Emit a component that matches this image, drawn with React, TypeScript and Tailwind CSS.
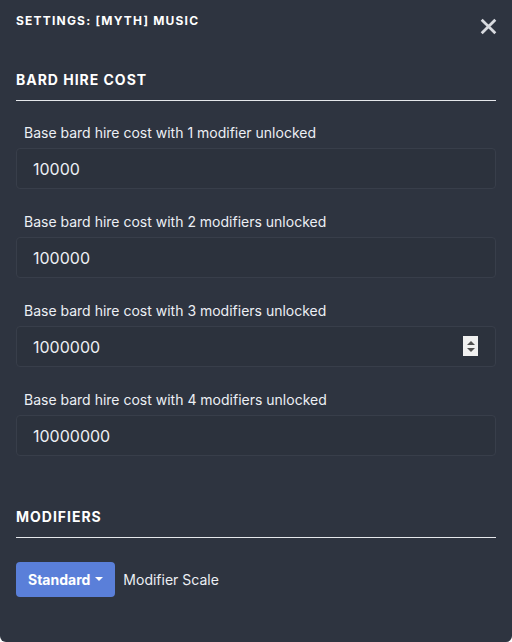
import { useState } from 'react'

const fields = [
  { label: 'Base bard hire cost with 1 modifier unlocked', value: '10000' },
  { label: 'Base bard hire cost with 2 modifiers unlocked', value: '100000' },
  { label: 'Base bard hire cost with 3 modifiers unlocked', value: '1000000', spinner: true },
  { label: 'Base bard hire cost with 4 modifiers unlocked', value: '10000000' },
]

function SectionHeading({ title }: { title: string }) {
  return (
    <div className="mx-4">
      <h2 className="text-[14px] leading-5 font-bold tracking-[0.07em] text-white">{title}</h2>
      <div className="mt-[10px] h-px bg-[#e5e7eb]" />
    </div>
  )
}

export default function App() {
  const [values, setValues] = useState(fields.map((f) => f.value))

  return (
    <div
      className="w-[512px] h-[642px] bg-[#2e3440] rounded-b-md text-[#e5e9f0] overflow-hidden"
      style={{ fontFamily: 'Inter, "Noto Sans", sans-serif' }}
    >
      {/* Header */}
      <div className="flex items-start justify-between pl-4 pr-[15px] pt-[13px]">
        <h1 className="text-[12px] leading-4 font-bold tracking-[0.1em] text-white">
          SETTINGS: [MYTH] MUSIC
        </h1>
        <button className="mt-[5px] text-[#d8dadf]">
          <svg width="17" height="17" viewBox="0 0 16 16" fill="none">
            <path d="M2.5 2.5 L13.5 13.5 M13.5 2.5 L2.5 13.5" stroke="currentColor" strokeWidth="2.6" strokeLinecap="square" />
          </svg>
        </button>
      </div>

      <div className="mt-[35px]">
        <SectionHeading title="BARD HIRE COST" />
      </div>

      <div className="mt-[22px] flex flex-col gap-[23px]">
        {fields.map((f, i) => (
          <div key={f.label} className="flex flex-col">
            <label className="px-6 text-[14px] leading-5 text-[#eceff4]">{f.label}</label>
            <div className="relative mx-4 mt-[5px]">
              <input
                type="text"
                value={values[i]}
                onChange={(e) => {
                  const next = [...values]
                  next[i] = e.target.value
                  setValues(next)
                }}
                className="w-full h-[41px] rounded-[4px] border border-[#383e4a] bg-[#2c323d] pl-4 pr-3 text-[16px] text-[#eceff4] outline-none"
              />
              {f.spinner && (
                <div className="absolute right-[18px] top-[10px] w-[15px] h-[20px] bg-[#f0f0f0] flex flex-col items-center justify-center gap-[3px]">
                  <div className="w-0 h-0 border-l-[4px] border-r-[4px] border-b-[4px] border-l-transparent border-r-transparent border-b-[#505050]" />
                  <div className="w-0 h-0 border-l-[4px] border-r-[4px] border-t-[4px] border-l-transparent border-r-transparent border-t-[#505050]" />
                </div>
              )}
            </div>
          </div>
        ))}
      </div>

      <div className="mt-[51px]">
        <SectionHeading title="MODIFIERS" />
      </div>

      <div className="mt-6 mx-4 flex items-center gap-2">
        <button className="h-[35px] px-3 rounded-[4px] bg-[#5a7fd9] text-white text-[14px] font-bold flex items-center gap-[5px]">
          Standard
          <span className="w-0 h-0 border-l-[4px] border-r-[4px] border-t-[4px] border-l-transparent border-r-transparent border-t-white mb-[2px]" />
        </button>
        <span className="text-[14px] text-[#eceff4]">Modifier Scale</span>
      </div>
    </div>
  )
}
